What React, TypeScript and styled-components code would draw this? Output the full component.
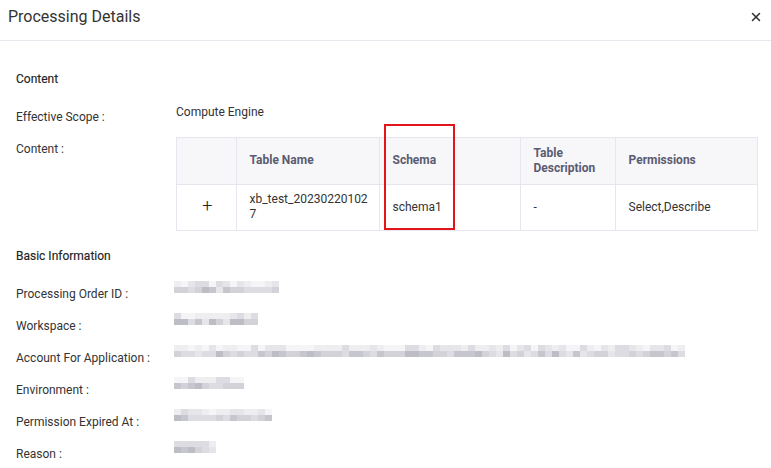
import * as React from "react";
import styled, { createGlobalStyle } from "styled-components";
import { X } from "lucide-react";

const GlobalStyle = createGlobalStyle`
  body {
    margin: 0;
    background: #ffffff;
    font-family: Roboto, "Liberation Sans", Arial, sans-serif;
    color: #333333;
  }
`;

const Dialog = styled.div`
  width: 771px;
  height: 468px;
  overflow: hidden;
  background: #ffffff;
`;

const Header = styled.div`
  height: 40px;
  display: flex;
  align-items: center;
  justify-content: space-between;
  padding: 0 8px 0 8px;
  border-bottom: 1px solid #e8e8ef;
`;

const Title = styled.h1`
  margin: 0;
  font-size: 16px;
  font-weight: 400;
  color: #333333;
  line-height: 20px;
  margin-top: -6px;
`;

const Close = styled.button`
  border: 0;
  background: none;
  padding: 0;
  display: flex;
  margin-top: -6px;
  color: #333333;
  cursor: pointer;
`;

const Body = styled.div`
  padding: 0 16px;
`;

const SectionTitle = styled.h2<{ $top: number }>`
  margin: ${(p) => p.$top}px 0 0;
  font-size: 12px;
  font-weight: 400;
  line-height: 18px;
  color: #222222;
  -webkit-text-stroke: 0.15px #222222;
`;

const Row = styled.div<{ $top: number; $height?: number }>`
  display: grid;
  grid-template-columns: 160px 1fr;
  margin-top: ${(p) => p.$top}px;
  ${(p) => (p.$height ? `height: ${p.$height}px;` : "")}
`;

const Label = styled.div<{ $pad: number }>`
  font-size: 12px;
  line-height: 18px;
  color: #333333;
  padding-top: ${(p) => p.$pad}px;
`;

const Value = styled.div`
  font-size: 12px;
  line-height: 18px;
  color: #333333;
`;

const TableWrap = styled.div`
  position: relative;
  width: 582px;
  border: 1px solid #e6e6ee;
  box-sizing: border-box;
`;

const Table = styled.table`
  width: 100%;
  border-collapse: collapse;
  table-layout: fixed;
`;

const Th = styled.th`
  box-sizing: border-box;
  height: 46px;
  padding: 0 8px 0 13px;
  text-align: left;
  background: #f7f7fa;
  border-right: 1px solid #e6e6ee;
  border-bottom: 1px solid #e6e6ee;
  font-size: 12px;
  font-weight: 700;
  line-height: 15px;
  color: #5b5b70;
  &:last-child {
    border-right: 0;
  }
`;

const Td = styled.td<{ $center?: boolean }>`
  box-sizing: border-box;
  height: 46px;
  padding: ${(p) => (p.$center ? "0" : "0 6px 0 13px")};
  text-align: ${(p) => (p.$center ? "center" : "left")};
  border-right: 1px solid #e6e6ee;
  font-size: 12px;
  line-height: 15px;
  color: #333333;
  word-break: break-all;
  &:last-child {
    border-right: 0;
  }
`;

const Expand = styled.span`
  font-size: 18px;
  font-weight: 300;
  color: #222222;
  padding-left: 2px;
`;

const Highlight = styled.div`
  position: absolute;
  left: 207px;
  top: -14px;
  width: 71px;
  height: 106px;
  border: 2px solid #e4141b;
  box-sizing: border-box;
  pointer-events: none;
`;

const Blur = styled.div<{ $cols: number; $top: number }>`
  display: grid;
  grid-template-columns: repeat(${(p) => p.$cols}, 7px);
  grid-auto-rows: 6px;
  margin-top: ${(p) => p.$top}px;
  margin-left: -2px;
`;

const Cell = styled.span.attrs<{ $c: string }>((p) => ({
  style: { background: p.$c },
}))<{ $c: string }>``;

const shades = ["#c6c6ce", "#d2d2d8", "#dcdce2", "#e6e6ea", "#eeeef1", "#f5f5f7", "#bdbdc6"];

const Pixelated = ({ cols, seed, top }: { cols: number; seed: number; top: number }) => {
  let s = seed;
  const next = () => {
    s = (s * 9301 + 49297) % 233280;
    return s / 233280;
  };
  const cells: string[] = [];
  for (let r = 0; r < 2; r++) {
    for (let c = 0; c < cols; c++) {
      const v = next();
      const idx = r === 0 ? Math.floor(2 + v * 4) : Math.floor(v * 5) === 4 ? 6 : Math.floor(v * 4);
      cells.push(shades[idx]);
    }
  }
  return (
    <Blur $cols={cols} $top={top}>
      {cells.map((c, i) => (
        <Cell key={i} $c={c} />
      ))}
    </Blur>
  );
};

const basicInfo = [
  { label: "Processing Order ID :", cols: 15, seed: 11 },
  { label: "Workspace :", cols: 12, seed: 23 },
  { label: "Account For Application :", cols: 73, seed: 37 },
  { label: "Environment :", cols: 10, seed: 41 },
  { label: "Permission Expired At :", cols: 14, seed: 59 },
  { label: "Reason :", cols: 6, seed: 71 },
];

const App = () => {
  return (
    <Dialog>
      <GlobalStyle />
      <Header>
        <Title>Processing Details</Title>
        <Close aria-label="close">
          <X size={14} strokeWidth={2.6} />
        </Close>
      </Header>
      <Body>
        <SectionTitle $top={29}>Content</SectionTitle>
        <Row $top={15} $height={34}>
          <Label $pad={5}>Effective Scope :</Label>
          <Value>Compute Engine</Value>
        </Row>
        <Row $top={0}>
          <Label $pad={3}>Content :</Label>
          <TableWrap>
            <Table>
              <colgroup>
                <col style={{ width: 59 }} />
                <col style={{ width: 143 }} />
                <col style={{ width: 141 }} />
                <col style={{ width: 95 }} />
                <col />
              </colgroup>
              <thead>
                <tr>
                  <Th></Th>
                  <Th>Table Name</Th>
                  <Th>Schema</Th>
                  <Th>Table Description</Th>
                  <Th>Permissions</Th>
                </tr>
              </thead>
              <tbody>
                <tr>
                  <Td $center>
                    <Expand>+</Expand>
                  </Td>
                  <Td>xb_test_202302201027</Td>
                  <Td>schema1</Td>
                  <Td>-</Td>
                  <Td>Select,Describe</Td>
                </tr>
              </tbody>
            </Table>
            <Highlight />
          </TableWrap>
        </Row>
        <SectionTitle $top={16}>Basic Information</SectionTitle>
        <div style={{ marginTop: 13 }}>
          {basicInfo.map((item) => (
            <Row key={item.label} $top={0} $height={32}>
              <Label $pad={7}>{item.label}</Label>
              <Pixelated cols={item.cols} seed={item.seed} top={3} />
            </Row>
          ))}
        </div>
      </Body>
    </Dialog>
  );
};

export default App;
